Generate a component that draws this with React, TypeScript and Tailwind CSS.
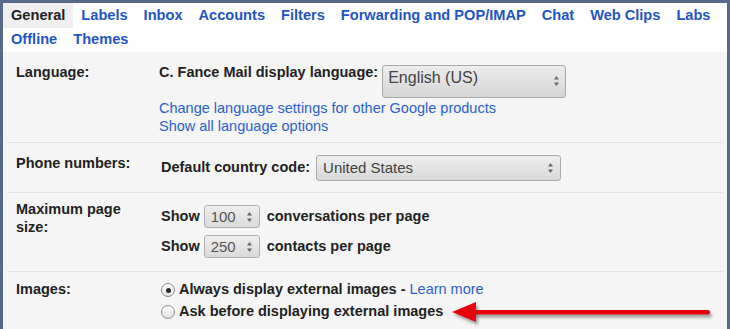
const tabsRow1 = ['General', 'Labels', 'Inbox', 'Accounts', 'Filters', 'Forwarding and POP/IMAP', 'Chat', 'Web Clips', 'Labs'];
const tabsRow2 = ['Offline', 'Themes'];

function Tab({ label }: { label: string }) {
  const active = label === 'General';
  return (
    <div
      className={
        'h-full flex items-center pl-[8px] pr-[8px] text-[14.6px] font-bold ' +
        (active ? 'bg-[#efefef] text-[#222]' : 'text-[#1f55c6]')
      }
    >
      {label}
    </div>
  );
}

function UpDown({ className }: { className: string }) {
  return (
    <svg className={className} width="7" height="14" viewBox="0 0 7 14">
      <path d="M3.5 2 L6 5.5 L1 5.5 Z" fill="#666" />
      <path d="M3.5 12 L6 8.5 L1 8.5 Z" fill="#666" />
    </svg>
  );
}

function Spinner({ value }: { value: string }) {
  return (
    <div className="relative ml-[4px] h-[23px] w-[56px] rounded-[3px] border border-[#b0b0b0] bg-linear-to-b from-[#eeeeee] to-[#dadada] pl-[6px] text-[15px] font-normal leading-[21px] text-[#555]">
      {value}
      <UpDown className="absolute right-[6px] top-[4px]" />
    </div>
  );
}

function Radio({ checked }: { checked?: boolean }) {
  return (
    <span className="flex h-[14px] w-[14px] items-center justify-center rounded-full border border-[#8c8c8c] bg-linear-to-b from-[#ffffff] to-[#e2e2e2]">
      {checked && <span className="h-[5px] w-[5px] rounded-full bg-[#2a2a2a]" />}
    </span>
  );
}

export default function App() {
  return (
    <div className="h-[329px] w-[730px] overflow-hidden bg-[#56688b] px-[3px] pt-[3px] font-['Liberation_Sans',Arial,sans-serif] text-[14.5px] text-[#222]">
      <div className="relative h-full bg-white">
        {/* tabs */}
        <div className="flex h-[25px]">
          {tabsRow1.map((t) => (
            <Tab key={t} label={t} />
          ))}
        </div>
        <div className="flex h-[24px]">
          {tabsRow2.map((t) => (
            <Tab key={t} label={t} />
          ))}
        </div>

        <div className="h-full bg-[#f5f5f5] px-[4px]">
          {/* Language */}
          <div className="grid grid-cols-[152px_1fr] border-b border-[#e3e3e3] pb-[7px]">
            <div className="pl-[9px] pt-[11px] font-bold leading-[18px]">Language:</div>
            <div className="pt-[11px]">
              <div className="flex items-start">
                <span className="font-bold leading-[18px]">C. Fance Mail display language:</span>
                <div className="relative ml-[4px] mt-[2px] h-[33px] w-[184px] rounded-[3px] border border-[#a9a9a9] bg-linear-to-b from-[#ededed] to-[#d5d5d5] pl-[5px] pt-[2px] text-[16px] leading-[20px] text-[#444]">
                  English (US)
                  <UpDown className="absolute right-[5px] top-[8px]" />
                </div>
              </div>
              <div className="mt-[1px] leading-[18px] text-[#2a61cf]">
                <div>Change language settings for other Google products</div>
                <div>Show all language options</div>
              </div>
            </div>
          </div>

          {/* Phone numbers */}
          <div className="grid grid-cols-[152px_1fr] border-b border-[#e3e3e3] pb-[11px]">
            <div className="pl-[9px] pt-[11px] font-bold leading-[18px]">Phone numbers:</div>
            <div className="ml-[2px] flex items-center pt-[12px]">
              <span className="font-bold">Default country code:</span>
              <div className="relative ml-[6px] h-[26px] w-[245px] rounded-[3px] border border-[#ababab] bg-linear-to-b from-[#eeeeee] to-[#d8d8d8] pl-[6px] text-[15px] leading-[24px] text-[#444]">
                United States
                <UpDown className="absolute right-[6px] top-[5px]" />
              </div>
            </div>
          </div>

          {/* Maximum page size */}
          <div className="grid grid-cols-[152px_1fr] border-b border-[#e3e3e3] pb-[13px]">
            <div className="pl-[9px] pt-[7px] font-bold leading-[18px]">
              Maximum page
              <br />
              size:
            </div>
            <div className="ml-[2px] flex flex-col gap-[7px] pt-[12px] font-bold">
              <div className="flex h-[23px] items-center">
                <span>Show</span>
                <Spinner value="100" />
                <span className="ml-[7px]">conversations per page</span>
              </div>
              <div className="flex h-[23px] items-center">
                <span>Show</span>
                <Spinner value="250" />
                <span className="ml-[7px]">contacts per page</span>
              </div>
            </div>
          </div>

          {/* Images */}
          <div className="grid grid-cols-[152px_1fr]">
            <div className="pl-[9px] pt-[8px] font-bold leading-[18px]">Images:</div>
            <div className="ml-[2px] pt-[7px] font-bold">
              <div className="flex h-[22px] items-center gap-[4px]">
                <Radio checked />
                <span>
                  Always display external images -{' '}
                  <span className="font-normal text-[#2a61cf]">Learn more</span>
                </span>
              </div>
              <div className="flex h-[22px] items-center gap-[4px]">
                <Radio />
                <span>Ask before displaying external images</span>
              </div>
            </div>
          </div>
        </div>

        {/* red annotation arrow */}
        <svg className="absolute left-[445px] top-[295px]" width="272" height="34" viewBox="0 0 272 34">
          <defs>
            <filter id="sh" x="-10%" y="-50%" width="120%" height="200%">
              <feGaussianBlur stdDeviation="1.5" />
            </filter>
          </defs>
          <g transform="translate(2 3)" fill="rgba(0,0,0,0.35)" filter="url(#sh)">
            <path d="M4 14 L28 4 L28 24 Z" />
            <rect x="26" y="12" width="236" height="4.5" rx="2" />
          </g>
          <g fill="#e8000b">
            <path d="M4 14 L28 4 L28 24 Z" />
            <rect x="26" y="12" width="236" height="4.5" rx="2" />
          </g>
        </svg>
      </div>
    </div>
  );
}
